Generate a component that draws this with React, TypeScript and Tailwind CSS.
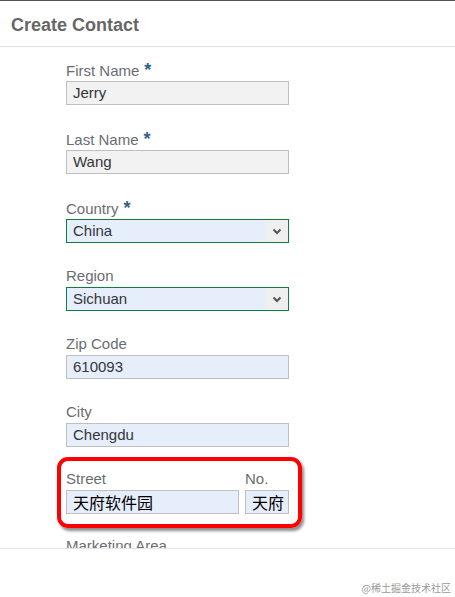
import React from "react";

const Label = ({ text, req }: { text: string; req?: boolean }) => (
  <div className="h-[18px] leading-[18px] text-[15px] text-[#6a6d70] whitespace-nowrap">
    {text}
    {req && <span className="ml-[5px] text-[#346187] font-bold text-[18px]">*</span>}
  </div>
);

const Input = ({ value, gray, w = "w-[223px]", cjk }: { value: string; gray?: boolean; w?: string; cjk?: boolean }) => (
  <div
    className={`${w} h-[24px] mt-[2px] border border-[#bfbfbf] ${gray ? "bg-[#f2f2f2]" : "bg-[#e6eefb]"} pl-[6px] flex items-center text-[15px] overflow-hidden whitespace-nowrap ${cjk ? "text-[#000]" : "text-[#32363a]"}`}
    style={cjk ? { fontFamily: '"Noto Sans CJK SC", sans-serif', fontSize: 16 } : undefined}
  >
    {value}
  </div>
);

const Select = ({ value }: { value: string }) => (
  <div className="w-[223px] h-[24px] mt-[2px] border border-[#107e3e] bg-[#e6eefb] flex items-center text-[15px] text-[#32363a]">
    <div className="flex-1 pl-[6px]">{value}</div>
    <div className="w-[23px] h-full bg-[#efefef] flex items-center justify-center">
      <svg width="10" height="7" viewBox="0 0 10 7">
        <path d="M1.5 1.5 L5 5 L8.5 1.5" stroke="#555" strokeWidth="2" fill="none" />
      </svg>
    </div>
  </div>
);

export default function App() {
  return (
    <div
      className="w-[455px] h-[597px] bg-white flex flex-col overflow-hidden"
      style={{ fontFamily: '"Liberation Sans", Arial, sans-serif' }}
    >
      <div className="h-[47px] border-t border-[#555] border-b border-b-[#d3e2ec] flex items-center pl-[11px] pt-[3px] shrink-0">
        <div className="text-[18px] font-bold text-[#666]">Create Contact</div>
      </div>
      <div className="h-[501px] overflow-hidden pl-[66px] pt-[14px] shrink-0">
        <div className="flex flex-col">
          <div>
            <Label text="First Name" req />
            <Input value="Jerry" gray />
          </div>
          <div className="mt-[25px]">
            <Label text="Last Name" req />
            <Input value="Wang" gray />
          </div>
          <div className="mt-[25px]">
            <Label text="Country" req />
            <Select value="China" />
          </div>
          <div className="mt-[24px]">
            <Label text="Region" />
            <Select value="Sichuan" />
          </div>
          <div className="mt-[24px]">
            <Label text="Zip Code" />
            <Input value="610093" />
          </div>
          <div className="mt-[24px]">
            <Label text="City" />
            <Input value="Chengdu" />
          </div>
          <div className="mt-[23px] relative w-[223px]">
            <div className="flex gap-[6px]">
              <div>
                <Label text="Street" />
                <Input value="天府软件园" w="w-[173px]" cjk />
              </div>
              <div>
                <Label text="No." />
                <Input value="天府" w="w-[44px]" cjk />
              </div>
            </div>
            <div className="absolute left-[-9px] right-[-13px] top-[-13px] bottom-[-14px] rounded-[11px] border-[4px] border-[#f00] shadow-[2px_3px_3px_rgba(0,0,0,0.45)]" />
          </div>
          <div className="mt-[23px]">
            <Label text="Marketing Area" />
          </div>
        </div>
      </div>
      <div className="flex-1 border-t border-[#e5e5e5] relative">
        <div
          className="absolute right-[4px] bottom-[2px] text-[10px] text-[#999]"
          style={{ fontFamily: '"Noto Sans CJK SC", sans-serif' }}
        >
          @稀土掘金技术社区
        </div>
      </div>
    </div>
  );
}
